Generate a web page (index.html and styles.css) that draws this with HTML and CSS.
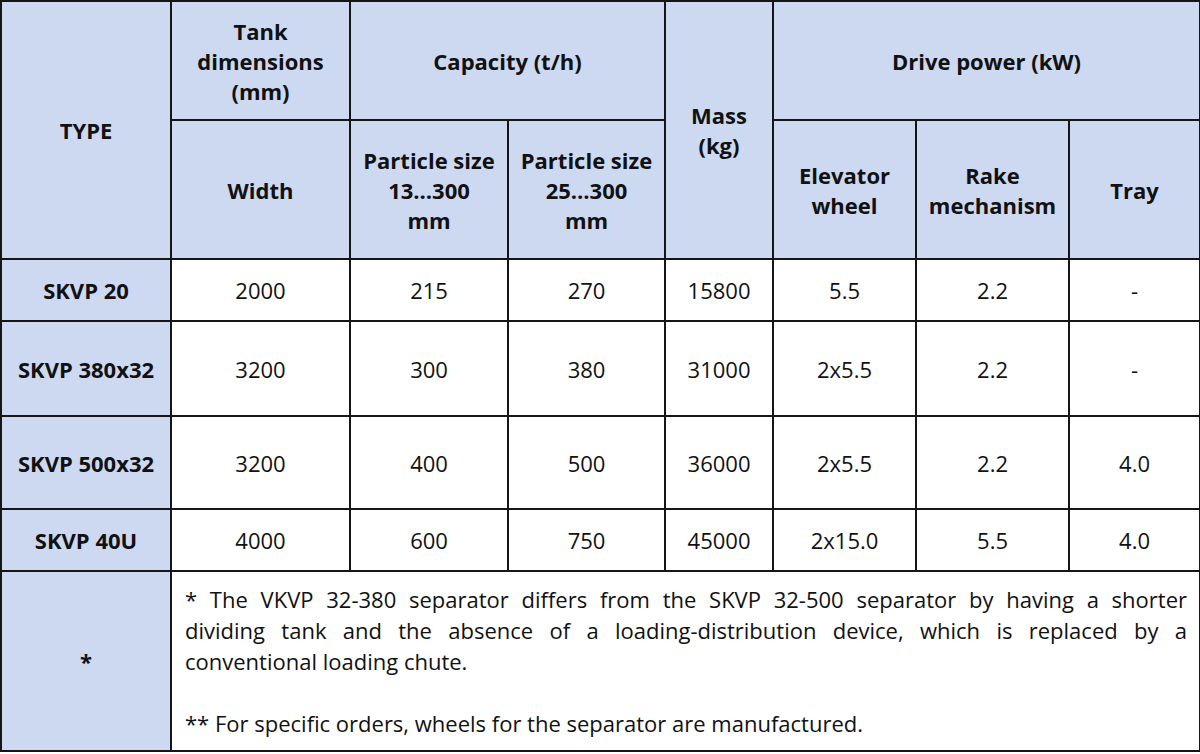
FILE: index.html
```html
<!DOCTYPE html>
<html lang="en">
<head>
<meta charset="utf-8">
<title>SKVP separators – specifications</title>
<link rel="stylesheet" href="styles.css">
</head>
<body>
<table class="spec">
  <colgroup>
    <col class="c-type">
    <col class="c-width">
    <col class="c-cap1">
    <col class="c-cap2">
    <col class="c-mass">
    <col class="c-elev">
    <col class="c-rake">
    <col class="c-tray">
  </colgroup>
  <thead>
    <tr class="row-h1">
      <th rowspan="2">TYPE</th>
      <th>Tank<br>dimensions<br>(mm)</th>
      <th colspan="2">Capacity (t/h)</th>
      <th rowspan="2">Mass<br>(kg)</th>
      <th colspan="3">Drive power (kW)</th>
    </tr>
    <tr class="row-h2">
      <th>Width</th>
      <th>Particle size<br>13…300<br>mm</th>
      <th>Particle size<br>25…300<br>mm</th>
      <th>Elevator<br>wheel</th>
      <th>Rake<br>mechanism</th>
      <th>Tray</th>
    </tr>
  </thead>
  <tbody>
    <tr class="row-a">
      <th>SKVP 20</th>
      <td>2000</td><td>215</td><td>270</td><td>15800</td><td>5.5</td><td>2.2</td><td>-</td>
    </tr>
    <tr class="row-b">
      <th>SKVP 380x32</th>
      <td>3200</td><td>300</td><td>380</td><td>31000</td><td>2x5.5</td><td>2.2</td><td>-</td>
    </tr>
    <tr class="row-c">
      <th>SKVP 500x32</th>
      <td>3200</td><td>400</td><td>500</td><td>36000</td><td>2x5.5</td><td>2.2</td><td>4.0</td>
    </tr>
    <tr class="row-d">
      <th>SKVP 40U</th>
      <td>4000</td><td>600</td><td>750</td><td>45000</td><td>2x15.0</td><td>5.5</td><td>4.0</td>
    </tr>
    <tr class="row-note">
      <th>*</th>
      <td colspan="7" class="note">
        <span class="jline">* The VKVP 32-380 separator differs from the SKVP 32-500 separator by having a shorter</span>
        <span class="jline">dividing tank and the absence of a loading-distribution device, which is replaced by a</span>
        <span class="line">conventional loading chute.</span>
        <span class="line blank">&nbsp;</span>
        <span class="line">** For specific orders, wheels for the separator are manufactured.</span>
      </td>
    </tr>
  </tbody>
</table>
</body>
</html>
```
FILE: styles.css
```css
html, body {
  margin: 0;
  padding: 0;
  background: #ffffff;
}

body {
  font-family: "Open Sans", "Noto Sans", "Liberation Sans", sans-serif;
  font-size: 22px;
  color: #111111;
}

.spec {
  border-collapse: collapse;
  table-layout: fixed;
  width: 1199px;
  border: 2px solid #161616;
}

.c-type  { width: 170px; }
.c-width { width: 179px; }
.c-cap1  { width: 158px; }
.c-cap2  { width: 157px; }
.c-mass  { width: 108px; }
.c-elev  { width: 143px; }
.c-rake  { width: 153px; }
.c-tray  { width: 131px; }

.spec th,
.spec td {
  border: 2px solid #161616;
  padding: 0 4px;
  text-align: center;
  vertical-align: middle;
  line-height: 30px;
}

.spec th {
  background: #cdd9f1;
  font-weight: 700;
}

.spec td {
  background: #ffffff;
  font-weight: 400;
}

.row-h1 { height: 119px; }
.row-h2 { height: 139px; }
.row-a  { height: 62px; }
.row-b  { height: 95px; }
.row-c  { height: 93px; }
.row-d  { height: 62px; }
.row-note { height: 180px; }

.spec td.note {
  text-align: left;
  padding: 0 12px 0 13px;
  line-height: 31px;
}

.jline {
  display: block;
  text-align: justify;
  text-align-last: justify;
}

.line {
  display: block;
}
```
